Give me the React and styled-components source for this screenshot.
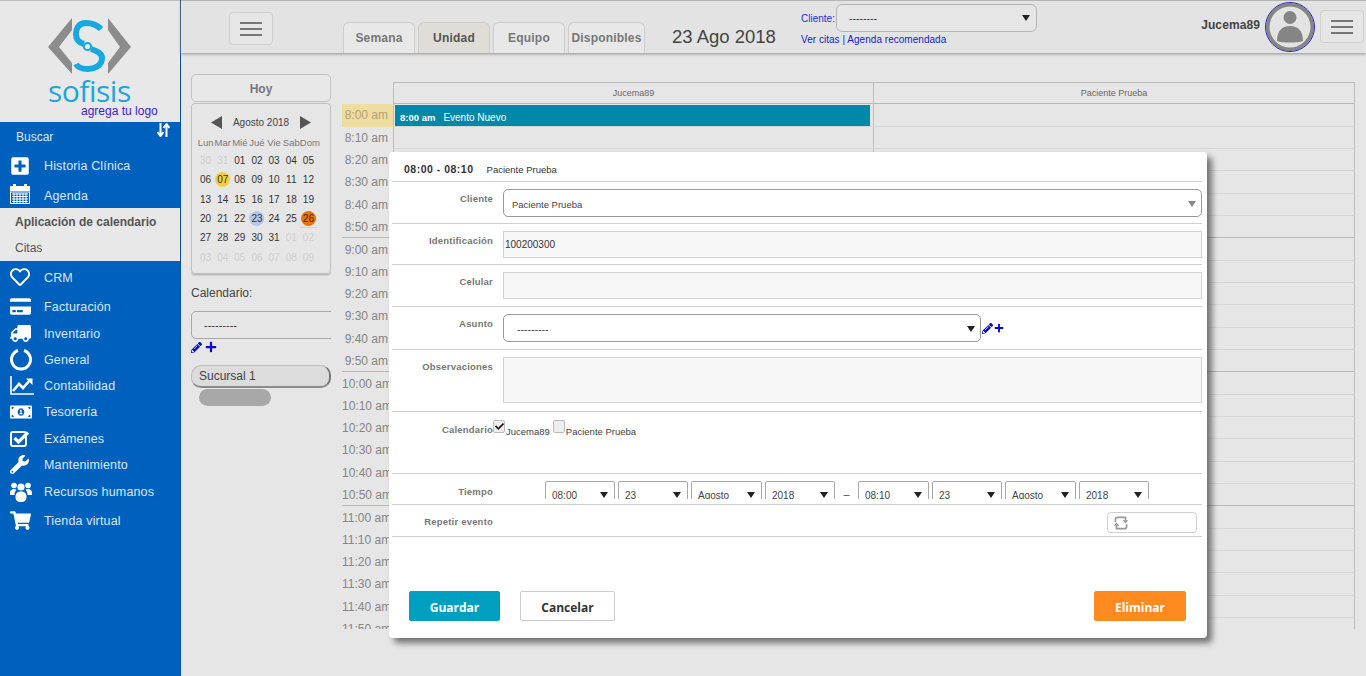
import React from "react";
import styled, { createGlobalStyle } from "styled-components";
import {
  FaPlusSquare, FaRegHeart, FaCreditCard, FaTruck, FaMoneyBillAlt,
  FaWrench, FaShoppingCart, FaPencilAlt, FaPlus, FaCheck,
} from "react-icons/fa";

const Global = createGlobalStyle`
  html, body { margin: 0; padding: 0; background: #e6e6e6; height: 676px; overflow: hidden; }
  body, button { font-family: "Liberation Sans", Arial, sans-serif; }
  * { box-sizing: border-box; }
  #root { height: 676px; }
`;

const Page = styled.div`display: flex; height: 676px; position: relative; overflow: hidden; background: #e6e6e6;`;

/* ---------- sidebar ---------- */
const Sidebar = styled.aside`width: 181px; flex: none; background: #0060bd; display: flex; flex-direction: column; border-right: 1px solid #0a4f96;`;
const LogoBox = styled.div`height: 122px; background: #e8e8e8; border-top: 1px solid #bdbdbd; display: flex; flex-direction: column; position: relative; padding-top: 17px;`;
const LogoMark = styled.svg`width: 180px; height: 60px; flex: none; display: block;`;
const LogoWord = styled.div`font-family: "Open Sans", sans-serif; font-weight: 400; font-size: 30px; line-height: 26px; letter-spacing: -0.5px; color: #1aa7de; margin-left: 48px; height: 24px;`;
const LogoTag = styled.div`font-size: 12px; line-height: 14px; color: #3a22cc; margin: 2px 0 0 81px; font-weight: 400;`;
const NavItem = styled.div`
  height: ${(p) => p.$h}px; display: flex; align-items: center; color: #dbe8f7; font-size: 12.5px; letter-spacing: 0.15px; padding-left: 10px;
`;
const IconSlot = styled.span`width: 34px; flex: none; display: flex; align-items: center; color: #fff;`;
const NavText = styled.span`padding-top: ${(p) => p.$pt ?? 2}px;`;
const SearchRow = styled.div`height: 29px; display: flex; justify-content: space-between; color: #dbe8f7; font-size: 12px; padding: 8px 10px 0 16px; line-height: 14px;`;
const SortGlyph = styled.svg`width: 13px; height: 14px; margin-top: -7px;`;
const SubMenu = styled.div`height: 53px; background: #e8e8e8; display: flex; flex-direction: column; padding: 6px 0 0 15px; color: #555;`;
const SubTitle = styled.div`font-size: 12px; font-weight: bold; line-height: 15px; margin-top: 1px;`;
const SubLink = styled.div`font-size: 12px; line-height: 15px; margin-top: 11px;`;

/* ---------- top bar ---------- */
const Main = styled.main`flex: 1; min-width: 0; display: flex; flex-direction: column;`;
const TopBar = styled.header`
  height: 53px; flex: none; background: #e3e3e3; border-top: 1px solid #b5b5b5; box-shadow: 0 1px 3px #8f8f8f;
  display: flex; position: relative; z-index: 1;
`;
const BurgerBtn = styled.button`
  width: 44px; height: 33px; flex: none; border: 1px solid #cfcfcf; border-radius: 4px; background: #e6e6e6; padding: 0;
  display: flex; flex-direction: column; justify-content: center; align-items: center; gap: 4px;
  margin: ${(p) => p.$m};
`;
const BurgerLine = styled.span`width: 22px; height: 2px; background: #777; display: block;`;
const Tabs = styled.nav`display: flex; gap: 3px; margin: 21px 0 0 70px; align-self: flex-start;`;
const Tab = styled.div`
  width: ${(p) => p.$w}px; height: 31px; border: 1px solid #cdcdcd; border-bottom: 0; border-radius: 6px 6px 0 0;
  background: ${(p) => (p.$active ? "#e0ddd8" : "#e8e8e8")}; color: ${(p) => (p.$active ? "#555" : "#777")};
  font-size: 12px; font-weight: bold; display: flex; align-items: center; justify-content: center; letter-spacing: 0.2px;
`;
const DateTitle = styled.div`font-size: 18.5px; color: #444; margin: 24px 0 0 27px; line-height: 23px; width: 129px; flex: none;`;
const ClientBox = styled.div`width: 240px; flex: none; display: flex; flex-direction: column; font-size: 10px; color: #1a1ad0; line-height: 12px;`;
const ClientTop = styled.div`display: flex; align-items: flex-start; height: 28px; margin-top: 3px;`;
const ClientLabel = styled.span`margin-top: 9px; color: #2a2ad8; width: 35px; flex: none;`;
const ClientSelect = styled.div`
  width: 201px; height: 28px; border: 1px solid #b5b5b5; border-radius: 6px; background: #e6e6e6; color: #333; font-size: 10.5px;
  display: flex; align-items: center; justify-content: space-between; padding: 0 6px 0 12px;
`;
const ClientLinks = styled.div`margin-top: 2px; letter-spacing: 0.03px;`;
const Spacer = styled.div`flex: 1;`;
const UserName = styled.div`font-size: 12px; font-weight: bold; color: #444; margin: 17px 5px 0 0; line-height: 14px; letter-spacing: 0.1px;`;
const Avatar = styled.div`
  width: 50px; height: 50px; border-radius: 50%; flex: none; border: 1px solid #2626b0; background: #e3e3e3; margin-top: 1px;
  box-shadow: inset 0 0 0 3.5px #858585; overflow: hidden;
`;

/* ---------- content ---------- */
const Content = styled.div`flex: 1; display: flex; min-height: 0; padding-left: 10px;`;
const LeftCol = styled.section`width: 140px; flex: none; padding-top: 21px; display: flex; flex-direction: column; overflow: hidden;`;
const TodayBtn = styled.div`
  height: 28px; flex: none; border: 1px solid #c2c2c2; border-radius: 5px; background: #e8e8e8; color: #777; font-size: 12px; font-weight: bold; padding-top: 2px;
  display: flex; align-items: center; justify-content: center;
`;
const MiniCal = styled.div`
  height: 171px; flex: none; margin-top: 1px; border: 1px solid #c0c0c0; border-radius: 4px; box-shadow: 0 1px 2px #a8a8a8; padding: 10px 5px 0 5px;
`;
const MiniHead = styled.div`display: flex; align-items: center; justify-content: center; gap: 11px; color: #444; font-size: 10px; height: 17px;`;
const MiniGrid = styled.div`display: grid; grid-template-columns: repeat(7, 17.15px); margin-top: 4px;`;
const WeekName = styled.div`font-size: 9.5px; color: #777; height: 16px; text-align: center; line-height: 16px; white-space: nowrap;`;
const Day = styled.div`
  height: 19.3px; display: flex; align-items: center; justify-content: center; font-size: 10px; color: ${(p) => (p.$muted ? "#d0d0d0" : "#333")};
  border-bottom: ${(p) => (p.$mark ? "1px solid #e8d488" : "0")};
`;
const DayDot = styled.span`
  width: 15px; height: 15px; border-radius: 50%; background: ${(p) => p.$bg || "transparent"}; display: flex; align-items: center; justify-content: center;
`;
const CalLabel = styled.div`font-size: 12px; color: #444; margin-top: 12px; line-height: 14px;`;
const CalSelect = styled.div`
  height: 28px; width: 150px; flex: none; margin-top: 11px; border: 1px solid #a8a8a8; border-radius: 5px; color: #333; font-size: 11px;
  display: flex; align-items: center; padding-left: 12px;
`;
const ActionIcons = styled.div`display: flex; align-items: center; gap: 3px; color: #0a0ac8; height: 14px; margin-top: 1px;`;
const Branch = styled.div`
  height: 23px; margin-top: 11px; flex: none; border-radius: 10px; background: #dcdcdc; border: 1px solid #bbb; border-right: 2px solid #777; border-bottom: 2px solid #8a8a8a;
  font-size: 12px; color: #444; display: flex; align-items: center; padding-left: 7px;
`;
const GrayPill = styled.div`height: 17px; width: 72px; margin: 1px 0 0 8px; flex: none; border-radius: 9px; background: #a8a8a8;`;

/* ---------- schedule ---------- */
const Schedule = styled.section`margin: 29px 0 0 11px; width: 1013px; height: 547px; overflow: hidden; flex: none;`;
const HeadRow = styled.div`display: grid; grid-template-columns: 51px 480px 482px; height: 21.33px;`;
const HeadCell = styled.div`
  border: 1px solid #bdbdbd; border-right: ${(p) => (p.$last ? "1px solid #bdbdbd" : "0")}; border-bottom: 0; font-size: 9px; color: #666; display: flex; align-items: center; justify-content: center;
`;
const HeadGap = styled.div``;
const SlotRow = styled.div`
  display: grid; grid-template-columns: 51px 480px 482px; height: 22.33px; position: relative;
`;
const TimeCell = styled.div`
  font-size: 12px; text-align: right; padding-right: 5px; white-space: nowrap;
  line-height: ${(p) => (p.$now ? 23 : 24)}px; margin-top: ${(p) => (p.$now ? 1 : 0)}px;
  color: ${(p) => (p.$now ? "#b3a27a" : "#858585")}; background: ${(p) => (p.$now ? "#efdca0" : "transparent")};
  border-top: ${(p) => (p.$hour ? "1px solid #b8b8b8" : "0")};
`;
const GridCell = styled.div`
  border-left: 1px solid #bdbdbd; border-top: 1px solid ${(p) => (p.$hour ? "#b8b8b8" : "#d6d6d6")};
  border-right: ${(p) => (p.$last ? "1px solid #bdbdbd" : "0")}; padding: 0 2px 0 1px;
`;
const EventBar = styled.div`
  height: 22px; margin-top: 1px; background: #0088a8; color: #fff; font-size: 10px; display: flex; align-items: center; gap: 8px; padding: 3px 0 0 5px; margin-right: 1px;
`;
const EventTime = styled.b`font-weight: bold; font-size: 9.5px;`;

/* ---------- modal ---------- */
const Modal = styled.div`
  position: absolute; left: 389px; top: 152px; width: 818px; height: 486px; background: #fff; border-radius: 4px;
  box-shadow: 5px 5px 6px rgba(0,0,0,.5); padding-left: 3px; display: flex; flex-direction: column;
`;
const ModalHead = styled.div`
  height: 30px; width: 810px; flex: none; border-bottom: 1px solid #d0d0d0; display: flex; align-items: center; gap: 13px; padding: 5px 0 0 12px; font-size: 9.5px; color: #333;
`;
const HeadTime = styled.b`font-size: 10.5px; letter-spacing: 0.5px;`;
const Row = styled.div`
  width: 810px; height: ${(p) => p.$h}px; flex: none; border-bottom: 1px solid #d0d0d0; display: grid; grid-template-columns: 101px 1fr; column-gap: 10px;
  padding-top: ${(p) => p.$pt ?? 7}px; overflow: hidden;
`;
const Label = styled.div`font-size: 9.5px; font-weight: bold; color: #777; text-align: right; line-height: 12px; padding-top: ${(p) => p.$pt ?? 4}px; white-space: nowrap; letter-spacing: 0.2px;`;
const RoundSelect = styled.div`
  height: 28px; width: ${(p) => p.$w || "100%"}; border: 1px solid #9a9a9a; border-radius: 5px; background: #fff; display: flex; align-items: center; justify-content: space-between;
  font-size: ${(p) => p.$fs || 9.5}px; color: #444; padding: 2px 5px 0 ${(p) => p.$pl || 8}px; flex: none;
`;
const Caret = styled.span`width: 0; height: 0; border-left: 4px solid transparent; border-right: 4px solid transparent; border-top: 6px solid ${(p) => p.$c || "#333"};`;
const Field = styled.div`
  height: ${(p) => p.$h || 27}px; background: #f7f7f7; border: 1px solid #d2d2d2; font-size: 10px; color: #333; display: flex; align-items: center; padding: 0 0 0 1px;
`;
const InlineRow = styled.div`display: flex; align-items: center; height: 28px; gap: 1px; color: #0a0ac8;`;
const Checks = styled.div`display: flex; align-items: flex-start; font-size: 9.5px; color: #444; margin-left: -10px;`;
const CheckBox = styled.span`
  width: 12px; height: 13px; border: 1px solid #bbb; border-radius: 2px; background: #eee; display: flex; align-items: center; justify-content: center; color: #222; flex: none;
`;
const CheckText = styled.span`margin: 6px 3px 0 1px; line-height: 12px;`;
const TimeRow = styled.div`display: flex; margin-left: 42px; gap: 3px; align-items: flex-start; height: 18px; overflow: hidden;`;
const TimeSelect = styled.div`
  width: ${(p) => p.$w || 70}px; height: 30px; flex: none; border: 1px solid #a8a8a8; border-radius: 2px 2px 0 0; background: #fff; font-size: 10px; color: #444;
  display: flex; justify-content: space-between; padding: 8px 6px 0 6px; line-height: 12px;
`;
const TimeCaret = styled(Caret)`margin-top: 2px;`;
const Dash = styled.span`width: 17px; flex: none; text-align: center; font-size: 11px; color: #444; padding-top: 7px;`;
const RepeatRow = styled.div`display: flex; justify-content: flex-end; padding-right: 5px;`;
const RepeatBox = styled.div`
  width: 90px; height: 21px; border: 1px solid #cfcfcf; border-radius: 4px; display: flex; align-items: center; padding-left: 4px;
`;
const Footer = styled.div`width: 794px; display: flex; gap: 20px; padding: 54px 0 0 17px;`;
const ActionBtn = styled.button`
  width: ${(p) => p.$w}px; height: 30px; border-radius: 2px; border: 1px solid ${(p) => p.$border}; background: ${(p) => p.$bg}; color: ${(p) => p.$fg};
  font-size: 12px; font-weight: bold; padding: 2px 0 0; font-family: "Open Sans", sans-serif;
  margin-left: ${(p) => (p.$auto ? "auto" : "0")};
`;

/* ---------- data ---------- */
const weekNames = ["Lun", "Mar", "Mié", "Jué", "Vie", "Sab", "Dom"];
const days = [
  ["30",1],["31",1],["01"],["02"],["03"],["04"],["05"],
  ["06"],["07",0,"#f0d040"],["08"],["09"],["10"],["11"],["12"],
  ["13"],["14"],["15"],["16"],["17"],["18"],["19"],
  ["20"],["21"],["22"],["23",0,"#b3c8e8"],["24"],["25"],["26",0,"#f07000",1],
  ["27"],["28"],["29"],["30"],["31"],["01",1],["02",1],
  ["03",1],["04",1],["05",1],["06",1],["07",1],["08",1],["09",1],
];
const times = [];
for (const h of [8, 9, 10, 11]) for (const m of ["00","10","20","30","40","50"]) times.push({ label: `${h}:${m} am`, hour: m === "00" });

const CalIcon = () => (
  <svg width="20" height="20" viewBox="0 0 20 20" fill="#fff">
    <rect x="0" y="2" width="20" height="5" /><rect x="3" y="0" width="3" height="3" /><rect x="14" y="0" width="3" height="3" />
    <rect x="0.5" y="8" width="19" height="11.5" fill="none" stroke="#fff" />
    <path d="M2 10h16M2 12.5h16M2 15h16M2 17.5h16M4 9v10M7 9v10M10 9v10M13 9v10M16 9v10" stroke="#fff" strokeWidth="1" />
  </svg>
);
const RingIcon = () => (
  <svg width="22" height="24" viewBox="0 0 22 24" fill="none" stroke="#fff" strokeWidth="3">
    <path d="M8 3.5A9.5 9.5 0 1 0 14 3.5" />
  </svg>
);
const ChartIcon = () => (
  <svg width="24" height="20" viewBox="0 0 24 20" fill="none" stroke="#fff">
    <path d="M1 1V19H24" strokeWidth="1.6" />
    <path d="M3 16L9 9L13 13L20 5" strokeWidth="2.6" />
    <path d="M16 3.5H22.5V10Z" fill="#fff" stroke="none" />
  </svg>
);
const CheckIcon = () => (
  <svg width="20" height="17" viewBox="0 0 20 17" fill="none" stroke="#fff">
    <rect x="1" y="2" width="15" height="14" rx="2" strokeWidth="2" />
    <path d="M4.5 8L8.5 12L18 2.5" strokeWidth="3.2" />
  </svg>
);
const PeopleIcon = () => (
  <svg width="22" height="20" viewBox="0 0 22 20" fill="#fff">
    <circle cx="4" cy="3.5" r="2.8" /><circle cx="18" cy="3.5" r="2.8" /><circle cx="11" cy="5" r="3.6" />
    <path d="M0 11C0 8 2 7 4 7C5.5 7 6 7.5 6.5 8C5.2 9 4.5 10.5 4.5 13H0Z" />
    <path d="M22 11C22 8 20 7 18 7C16.5 7 16 7.5 15.5 8C16.8 9 17.5 10.5 17.5 13H22Z" />
    <path d="M5.5 15C5.5 11 8 9.5 11 9.5C14 9.5 16.5 11 16.5 15C16.5 19 14 20 11 20C8 20 5.5 19 5.5 15Z" />
  </svg>
);
const RepeatIcon = () => (
  <svg width="18" height="18" viewBox="0 0 16 16" fill="none" stroke="#999" strokeWidth="1.5">
    <path d="M3 7V5a2 2 0 0 1 2-2h7v3" />
    <path d="M13 9v2a2 2 0 0 1-2 2H4v-3" />
    <path d="M9.5 5.5h5L12 8.5ZM1.5 10.5h5L4 7.5Z" fill="#999" stroke="none" />
  </svg>
);
const MonthArrow = ({ flip }) => (
  <svg width="11" height="13" viewBox="0 0 11 13" fill="#555">
    <path d={flip ? "M0 0L11 6.5L0 13Z" : "M11 0L0 6.5L11 13Z"} />
  </svg>
);

const navTop = [
  { t: "Historia Clínica", h: 29, pt: 0, i: <FaPlusSquare size={20} /> },
  { t: "Agenda", h: 28, pt: 3, i: <CalIcon /> },
];
const navBottom = [
  { t: "CRM", h: 31, i: <FaRegHeart size={20} /> },
  { t: "Facturación", h: 28, i: <FaCreditCard size={21} /> },
  { t: "Inventario", h: 26, i: <FaTruck size={21} style={{ transform: "scaleX(-1)" }} /> },
  { t: "General", h: 26, i: <RingIcon /> },
  { t: "Contabilidad", h: 26, i: <ChartIcon /> },
  { t: "Tesorería", h: 27, pt: 0, i: <FaMoneyBillAlt size={22} /> },
  { t: "Exámenes", h: 26, i: <CheckIcon /> },
  { t: "Mantenimiento", h: 27, pt: 0, i: <FaWrench size={19} /> },
  { t: "Recursos humanos", h: 27, pt: 0, i: <PeopleIcon /> },
  { t: "Tienda virtual", h: 30, i: <FaShoppingCart size={21} /> },
];

const Burger = ({ m }) => (
  <BurgerBtn $m={m}><BurgerLine /><BurgerLine /><BurgerLine /></BurgerBtn>
);

export default function App() {
  return (
    <Page>
      <Global />
      <Sidebar>
        <LogoBox>
          <LogoMark viewBox="0 0 180 60">
            <g transform="translate(0,-18)">
              <polygon points="72,18 48,47 72,74 72,63 59,47 72,30" fill="#8c8c8c" />
              <polygon points="108,18 131,47 108,74 108,63 120,47 108,30" fill="#8c8c8c" />
              <path d="M101 29C96 24 90 23 86 23C78 23 76 29 76 34C76 40 80 43 84 44M91 49C97 51 102 53 102 58C102 66 94 69 88 69C83 69 78 68 76 64" fill="none" stroke="#17a8e0" strokeWidth="6" />
              <circle cx="87.5" cy="46.5" r="3.6" fill="none" stroke="#17a8e0" strokeWidth="2" />
            </g>
          </LogoMark>
          <LogoWord>sofisis</LogoWord>
          <LogoTag>agrega tu logo</LogoTag>
        </LogoBox>
        <SearchRow>
          <span>Buscar</span>
          <SortGlyph viewBox="0 0 13 14" fill="none" stroke="#fff" strokeWidth="2">
            <path d="M3.5 0v12M0.5 9l3 4 3-4M9.5 14V2M6.5 5l3-4 3 4" />
          </SortGlyph>
        </SearchRow>
        {navTop.map((n) => (
          <NavItem key={n.t} $h={n.h}><IconSlot>{n.i}</IconSlot><NavText $pt={n.pt}>{n.t}</NavText></NavItem>
        ))}
        <SubMenu>
          <SubTitle>Aplicación de calendario</SubTitle>
          <SubLink>Citas</SubLink>
        </SubMenu>
        {navBottom.map((n) => (
          <NavItem key={n.t} $h={n.h}><IconSlot>{n.i}</IconSlot><NavText $pt={n.pt}>{n.t}</NavText></NavItem>
        ))}
      </Sidebar>

      <Main>
        <TopBar>
          <Burger m="11px 0 0 48px" />
          <Tabs>
            <Tab $w={72}>Semana</Tab>
            <Tab $w={72} $active>Unidad</Tab>
            <Tab $w={72}>Equipo</Tab>
            <Tab $w={77}>Disponibles</Tab>
          </Tabs>
          <DateTitle>23 Ago 2018</DateTitle>
          <ClientBox>
            <ClientTop>
              <ClientLabel>Cliente:</ClientLabel>
              <ClientSelect>--------<Caret $c="#222" /></ClientSelect>
            </ClientTop>
            <ClientLinks>Ver citas | Agenda recomendada</ClientLinks>
          </ClientBox>
          <Spacer />
          <UserName>Jucema89</UserName>
          <Avatar>
            <svg width="48" height="48" viewBox="0 0 48 48" fill="#858585">
              <circle cx="24" cy="14.5" r="6.5" />
              <path d="M11 38C11 28 16 23 24 23C32 23 37 28 37 38C33 40 15 40 11 38Z" />
            </svg>
          </Avatar>
          <Burger m="9px 2px 0 5px" />
        </TopBar>

        <Content>
          <LeftCol>
            <TodayBtn>Hoy</TodayBtn>
            <MiniCal>
              <MiniHead>
                <MonthArrow />
                <span>Agosto 2018</span>
                <MonthArrow flip />
              </MiniHead>
              <MiniGrid>
                {weekNames.map((w) => <WeekName key={w}>{w}</WeekName>)}
                {days.map(([d, muted, bg, mark], i) => (
                  <Day key={i} $muted={!!muted} $mark={!!mark}><DayDot $bg={bg}>{d}</DayDot></Day>
                ))}
              </MiniGrid>
            </MiniCal>
            <CalLabel>Calendario:</CalLabel>
            <CalSelect>---------</CalSelect>
            <ActionIcons><FaPencilAlt size={11} /><FaPlus size={12} /></ActionIcons>
            <Branch>Sucursal 1</Branch>
            <GrayPill />
          </LeftCol>

          <Schedule>
            <HeadRow>
              <HeadGap />
              <HeadCell>Jucema89</HeadCell>
              <HeadCell $last>Paciente Prueba</HeadCell>
            </HeadRow>
            {times.map((t, i) => (
              <SlotRow key={t.label}>
                <TimeCell $now={i === 0} $hour={t.hour && i > 0}>{t.label}</TimeCell>
                <GridCell $hour={t.hour}>
                  {i === 0 && <EventBar><EventTime>8:00 am</EventTime> Evento Nuevo</EventBar>}
                </GridCell>
                <GridCell $hour={t.hour} $last />
              </SlotRow>
            ))}
          </Schedule>
        </Content>
      </Main>

      <Modal>
        <ModalHead><HeadTime>08:00 - 08:10</HeadTime><span>Paciente Prueba</span></ModalHead>
        <Row $h={42}>
          <Label>Cliente</Label>
          <RoundSelect>Paciente Prueba<Caret $c="#888" /></RoundSelect>
        </Row>
        <Row $h={41}>
          <Label>Identificación</Label>
          <Field>100200300</Field>
        </Row>
        <Row $h={42}>
          <Label>Celular</Label>
          <Field />
        </Row>
        <Row $h={43}>
          <Label>Asunto</Label>
          <InlineRow>
            <RoundSelect $w="478px" $fs={10.5} $pl={13}>---------<Caret $c="#222" /></RoundSelect>
            <FaPencilAlt size={11} /><FaPlus size={10} />
          </InlineRow>
        </Row>
        <Row $h={62}>
          <Label>Observaciones</Label>
          <Field $h={46} />
        </Row>
        <Row $h={62} $pt={8}>
          <Label $pt={4}>Calendario</Label>
          <Checks>
            <CheckBox><FaCheck size={9} /></CheckBox><CheckText>Jucema89</CheckText>
            <CheckBox /><CheckText>Paciente Prueba</CheckText>
          </Checks>
        </Row>
        <Row $h={31} $pt={7}>
          <Label $pt={5}>Tiempo</Label>
          <TimeRow>
            <TimeSelect>08:00<TimeCaret $c="#222" /></TimeSelect>
            <TimeSelect>23<TimeCaret $c="#222" /></TimeSelect>
            <TimeSelect $w={71}>Agosto<TimeCaret $c="#222" /></TimeSelect>
            <TimeSelect>2018<TimeCaret $c="#222" /></TimeSelect>
            <Dash>–</Dash>
            <TimeSelect $w={71}>08:10<TimeCaret $c="#222" /></TimeSelect>
            <TimeSelect>23<TimeCaret $c="#222" /></TimeSelect>
            <TimeSelect $w={71}>Agosto<TimeCaret $c="#222" /></TimeSelect>
            <TimeSelect>2018<TimeCaret $c="#222" /></TimeSelect>
          </TimeRow>
        </Row>
        <Row $h={32} $pt={7}>
          <Label $pt={4}>Repetir evento</Label>
          <RepeatRow><RepeatBox><RepeatIcon /></RepeatBox></RepeatRow>
        </Row>
        <Footer>
          <ActionBtn $w={91} $bg="#009fbf" $border="#009fbf" $fg="#fff">Guardar</ActionBtn>
          <ActionBtn $w={95} $bg="#fff" $border="#ccc" $fg="#333">Cancelar</ActionBtn>
          <ActionBtn $w={92} $bg="#ff8a1f" $border="#ff8a1f" $fg="#fff" $auto>Eliminar</ActionBtn>
        </Footer>
      </Modal>
    </Page>
  );
}
